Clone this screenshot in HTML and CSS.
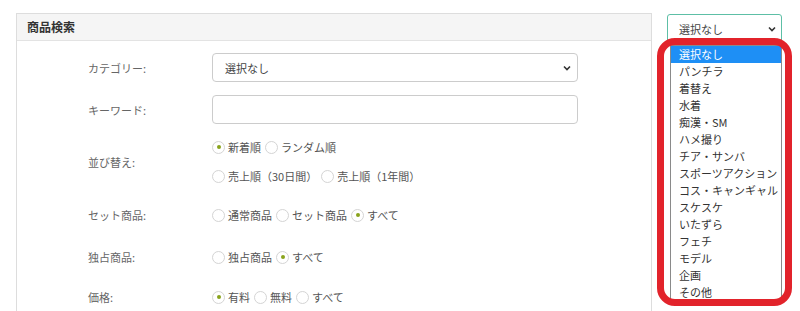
FILE: index.html
```html
<!DOCTYPE html>
<html>
<head>
	<title>商品検索</title>
	<link rel="stylesheet" href="styles.css">
</head>
<body>
<div class="page">
	<div class="panel">
		<div class="panel-head">商品検索</div>
		<div class="panel-body">
			<div class="row row-cat">
				<div class="label">カテゴリー:</div>
				<div class="field">
					<div class="select wide">
						<span>選択なし</span>
						<svg class="chev" width="8" height="6" viewBox="0 0 8 6"><polyline points="1,1.5 4,4.5 7,1.5" fill="none" stroke="#333" stroke-width="1.6"/></svg>
					</div>
				</div>
			</div>
			<div class="row row-key">
				<div class="label">キーワード:</div>
				<div class="field"><div class="input"></div></div>
			</div>
			<div class="row row-sort">
				<div class="label">並び替え:</div>
				<div class="field stack">
					<div class="radios">
						<span class="radio on"></span><span class="rtext">新着順</span>
						<span class="radio"></span><span class="rtext">ランダム順</span>
					</div>
					<div class="radios">
						<span class="radio"></span><span class="rtext">売上順（30日間）</span>
						<span class="radio"></span><span class="rtext">売上順（1年間）</span>
					</div>
				</div>
			</div>
			<div class="row row-set">
				<div class="label">セット商品:</div>
				<div class="field radios">
					<span class="radio"></span><span class="rtext">通常商品</span>
					<span class="radio"></span><span class="rtext">セット商品</span>
					<span class="radio on"></span><span class="rtext">すべて</span>
				</div>
			</div>
			<div class="row row-excl">
				<div class="label">独占商品:</div>
				<div class="field radios">
					<span class="radio"></span><span class="rtext">独占商品</span>
					<span class="radio on"></span><span class="rtext">すべて</span>
				</div>
			</div>
			<div class="row row-price">
				<div class="label">価格:</div>
				<div class="field radios">
					<span class="radio on"></span><span class="rtext">有料</span>
					<span class="radio"></span><span class="rtext">無料</span>
					<span class="radio"></span><span class="rtext">すべて</span>
				</div>
			</div>
		</div>
	</div>

	<div class="side">
		<div class="select focus">
			<span>選択なし</span>
			<svg class="chev" width="8" height="6" viewBox="0 0 8 6"><polyline points="1,1.5 4,4.5 7,1.5" fill="none" stroke="#333" stroke-width="1.6"/></svg>
		</div>
		<ul class="options">
			<li class="picked">選択なし</li>
			<li>パンチラ</li>
			<li>着替え</li>
			<li>水着</li>
			<li>痴漢・SM</li>
			<li>ハメ撮り</li>
			<li>チア・サンバ</li>
			<li>スポーツアクション</li>
			<li>コス・キャンギャル</li>
			<li>スケスケ</li>
			<li>いたずら</li>
			<li>フェチ</li>
			<li>モデル</li>
			<li>企画</li>
			<li>その他</li>
		</ul>
		<div class="mark"></div>
	</div>
</div>
</body>
</html>
```

FILE: styles.css
```css
body {
	margin: 0;
	background: #fff;
	font-family: "Noto Sans CJK JP", "Noto Sans", sans-serif;
	font-size: 11px;
	color: #555;
	overflow: hidden;
}
.page {
	display: flex;
	align-items: flex-start;
	padding: 13px 0 0 16px;
}
.panel {
	width: 636px;
	height: 310px;
	border: 1px solid #ddd;
	border-bottom: none;
	box-sizing: border-box;
}
.panel-head {
	height: 26px;
	line-height: 26px;
	background: #f5f5f5;
	border-bottom: 1px solid #e3e3e3;
	padding-left: 10px;
	font-size: 12px;
	font-weight: bold;
	color: #333;
}
.panel-body {
	padding-top: 12px;
}
.row {
	display: flex;
	align-items: center;
}
.label {
	width: 124px;
	padding-left: 71px;
	flex-shrink: 0;
	color: #666;
}
.field {
	display: flex;
	align-items: center;
}
.row-cat { height: 29px; }
.row-key { height: 29px; margin-top: 13px; }
.row-sort { height: 49px; margin-top: 13px; }
.row-set { height: 20px; margin-top: 19px; }
.row-excl { height: 20px; margin-top: 22px; }
.row-price { height: 20px; margin-top: 20px; }

.select {
	display: flex;
	align-items: center;
	justify-content: space-between;
	box-sizing: border-box;
	height: 29px;
	border: 1px solid #ccc;
	border-radius: 4px;
	padding: 0 6px 0 12px;
	color: #444;
	background: #fff;
}
.select.wide {
	width: 366px;
}
.input {
	width: 366px;
	height: 29px;
	box-sizing: border-box;
	border: 1px solid #ccc;
	border-radius: 4px;
}
.stack {
	flex-direction: column;
	align-items: flex-start;
	gap: 9px;
}
.radios {
	display: flex;
	align-items: center;
	height: 20px;
}
.radio {
	width: 13px;
	height: 13px;
	box-sizing: border-box;
	border: 1px solid #d4d4d4;
	border-radius: 50%;
	margin-right: 3px;
	display: flex;
	align-items: center;
	justify-content: center;
	background: #fff;
}
.radio.on::after {
	content: "";
	width: 4px;
	height: 4px;
	border-radius: 50%;
	background: #8aa31c;
}
.rtext {
	margin-right: 4px;
	color: #555;
}

.side {
	position: relative;
	margin: 1px 0 0 15px;
	width: 115px;
}
.select.focus {
	height: 29px;
	border: 1px solid #5dbfa6;
	border-radius: 3px;
	padding: 0 5px 0 11px;
}
.options {
	list-style: none;
	margin: 2px 0 0 3px;
	padding: 0;
	border: 1px solid #8a8a8a;
	background: #fff;
	font-size: 11px;
	color: #333;
}
.options li {
	height: 17px;
	line-height: 17px;
	padding-left: 8px;
	white-space: nowrap;
}
.options li.picked {
	background: #1e8ff5;
	color: #fff;
}
.mark {
	position: absolute;
	left: -10px;
	top: 24px;
	width: 135px;
	height: 268px;
	box-sizing: border-box;
	border: 7px solid #e2232b;
	border-radius: 18px;
}
```
